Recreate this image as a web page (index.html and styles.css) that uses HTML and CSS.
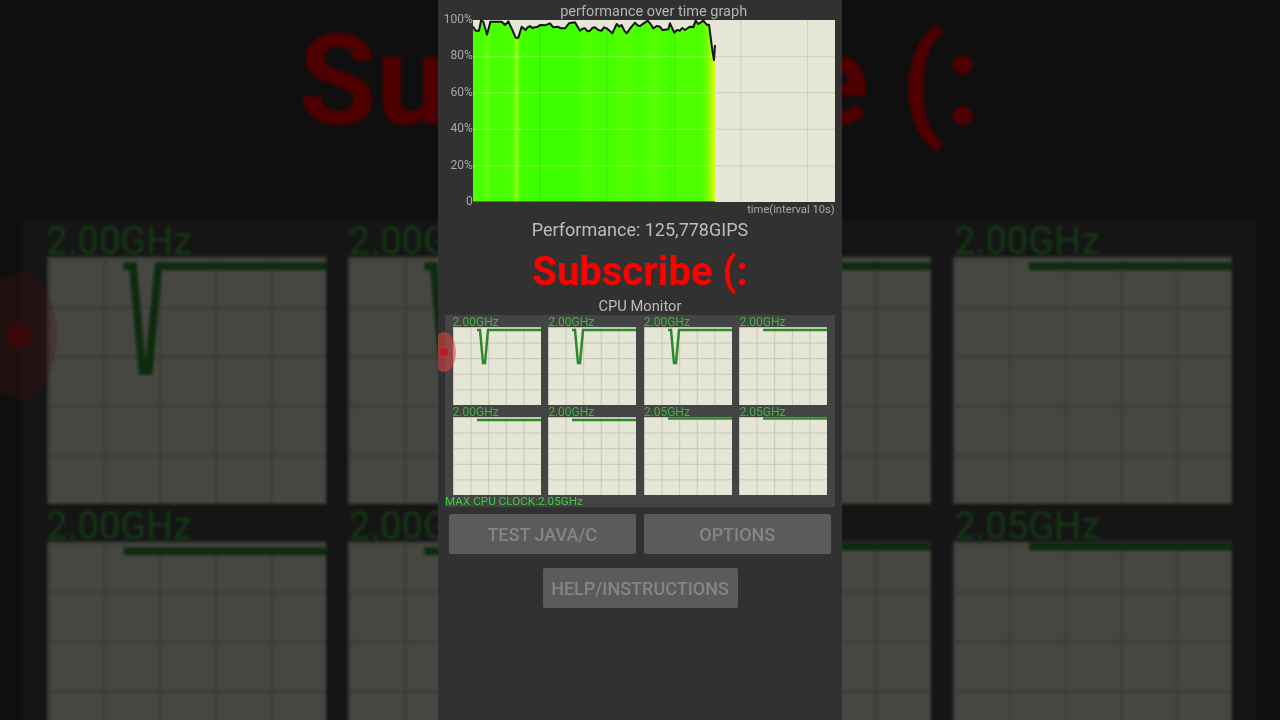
FILE: index.html
```html
<!DOCTYPE html>
<html lang="en">
<head>
    <meta charset="UTF-8">
    <meta name="viewport" content="width=device-width, initial-scale=1.0">
    <title>CPU Throttling Test</title>
    <link rel="stylesheet" href="styles.css">
</head>
<body>

    <!-- Enlarged, dimmed copy of the lower screen behind the video -->
    <div class="backdrop" aria-hidden="true">
        <div class="backdrop-inner">
            <div class="subscribe">Subscribe (:</div>
            <div class="cpu-title"></div>
            <div class="monitor">
                <div class="core"><span class="core-label">2.00GHz</span><div class="core-plot"><svg class="trace" viewBox="0 0 88 78"><polyline points="24,3 27,3 30,36 32,36 35,3 88,3"/></svg></div></div>
                <div class="core"><span class="core-label">2.00GHz</span><div class="core-plot"><svg class="trace" viewBox="0 0 88 78"><polyline points="24,3 27,3 30,36 32,36 35,3 88,3"/></svg></div></div>
                <div class="core"><span class="core-label">2.00GHz</span><div class="core-plot"><svg class="trace" viewBox="0 0 88 78"><polyline points="24,3 27,3 30,36 32,36 35,3 88,3"/></svg></div></div>
                <div class="core"><span class="core-label">2.00GHz</span><div class="core-plot"><svg class="trace" viewBox="0 0 88 78"><polyline points="24,3 88,3"/></svg></div></div>
                <div class="core"><span class="core-label">2.00GHz</span><div class="core-plot"><svg class="trace" viewBox="0 0 88 78"><polyline points="24,3 88,3"/></svg></div></div>
                <div class="core"><span class="core-label">2.00GHz</span><div class="core-plot"><svg class="trace" viewBox="0 0 88 78"><polyline points="24,3 88,3"/></svg></div></div>
                <div class="core"><span class="core-label">2.05GHz</span><div class="core-plot"><svg class="trace" viewBox="0 0 88 78"><polyline points="24,1.5 88,1.5"/></svg></div></div>
                <div class="core"><span class="core-label">2.05GHz</span><div class="core-plot"><svg class="trace" viewBox="0 0 88 78"><polyline points="24,1.5 88,1.5"/></svg></div></div>
            </div>
            <div class="touch-dot touch-dot-back"></div>
        </div>
    </div>

    <div class="phone">
        <div class="graph">
            <div class="graph-title">performance over time graph</div>
            <div class="y-labels">
                <span>100%</span>
                <span>80%</span>
                <span>60%</span>
                <span>40%</span>
                <span>20%</span>
                <span>0</span>
            </div>
            <svg class="plot" viewBox="104 60 1086 545" preserveAspectRatio="none">
                <defs>
                    <linearGradient id="bands" gradientUnits="userSpaceOnUse" x1="104" y1="0" x2="830" y2="0">
                        <stop offset="0" stop-color="#50ff00"/>
                        <stop offset=".036" stop-color="#44ff00"/>
                        <stop offset=".058" stop-color="#62ff0c"/>
                        <stop offset=".077" stop-color="#44ff00"/>
                        <stop offset=".163" stop-color="#4cff00"/>
                        <stop offset=".18" stop-color="#8cff18"/>
                        <stop offset=".194" stop-color="#46ff00"/>
                        <stop offset=".27" stop-color="#3cff00"/>
                        <stop offset=".435" stop-color="#3eff00"/>
                        <stop offset=".463" stop-color="#50ff00"/>
                        <stop offset=".545" stop-color="#42ff00"/>
                        <stop offset=".63" stop-color="#54ff00"/>
                        <stop offset=".683" stop-color="#46ff00"/>
                        <stop offset=".752" stop-color="#56ff04"/>
                        <stop offset=".82" stop-color="#42ff00"/>
                        <stop offset=".842" stop-color="#52ff00"/>
                        <stop offset=".945" stop-color="#4eff00"/>
                        <stop offset=".98" stop-color="#90ff00"/>
                        <stop offset="1" stop-color="#e6ff10"/>
                    </linearGradient>
                </defs>
                <path class="grid-line" d="M104 170H1190M104 278H1190M104 387H1190M104 497H1190M908 60V605M1108 60V605"/>
                <polygon class="fill" points="104,80 112,92 122,92 128,62 135,65 146,104 156,65 190,65 200,75 210,64 222,90 232,113 240,113 250,80 262,90 275,78 290,82 305,75 335,70 345,82 380,85 392,70 410,67 425,92 440,85 455,92 470,82 490,92 505,85 522,100 535,72 550,75 565,100 590,68 605,78 628,62 645,85 665,80 672,90 690,88 695,70 708,98 725,92 740,90 755,80 772,62 780,72 795,62 805,74 812,74 822,150 827,180 830,180 830,605 104,605"/>
                <path class="grid-on-green-h" d="M104 170H826M104 278H830M104 387H830M104 497H830"/>
                <path class="grid-on-green-v" d="M304 75V605M505 85V605M710 92V605"/>
                <path class="baseline" d="M104 604H830"/>
                <polyline class="curve" points="104,80 112,92 122,92 128,62 135,65 146,104 156,65 190,65 200,75 210,64 222,90 232,113 240,113 250,80 262,90 268,82 275,78 282,84 290,82 298,80 305,75 320,76 335,70 345,82 358,80 368,85 380,85 392,70 410,67 425,92 432,86 440,85 448,94 455,92 462,84 470,82 480,90 490,92 497,82 505,85 514,92 522,100 535,72 543,80 550,75 558,92 565,100 578,82 590,68 598,76 605,78 616,70 628,62 638,74 645,85 655,78 665,80 672,90 690,88 695,70 708,98 716,90 725,92 732,84 740,90 755,80 765,82 772,62 780,72 795,62 805,74 812,74 822,150 827,180 830,135"/>
            </svg>
            <div class="x-label">time(interval 10s)</div>
        </div>

        <div class="performance">Performance: 125,778GIPS</div>
        <div class="subscribe">Subscribe (:</div>
        <div class="cpu-title">CPU Monitor</div>

        <div class="monitor">
            <div class="core"><span class="core-label">2.00GHz</span><div class="core-plot"><svg class="trace" viewBox="0 0 88 78"><polyline points="24,3 27,3 30,36 32,36 35,3 88,3"/></svg></div></div>
            <div class="core"><span class="core-label">2.00GHz</span><div class="core-plot"><svg class="trace" viewBox="0 0 88 78"><polyline points="24,3 27,3 30,36 32,36 35,3 88,3"/></svg></div></div>
            <div class="core"><span class="core-label">2.00GHz</span><div class="core-plot"><svg class="trace" viewBox="0 0 88 78"><polyline points="24,3 27,3 30,36 32,36 35,3 88,3"/></svg></div></div>
            <div class="core"><span class="core-label">2.00GHz</span><div class="core-plot"><svg class="trace" viewBox="0 0 88 78"><polyline points="24,3 88,3"/></svg></div></div>
            <div class="core"><span class="core-label">2.00GHz</span><div class="core-plot"><svg class="trace" viewBox="0 0 88 78"><polyline points="24,3 88,3"/></svg></div></div>
            <div class="core"><span class="core-label">2.00GHz</span><div class="core-plot"><svg class="trace" viewBox="0 0 88 78"><polyline points="24,3 88,3"/></svg></div></div>
            <div class="core"><span class="core-label">2.05GHz</span><div class="core-plot"><svg class="trace" viewBox="0 0 88 78"><polyline points="24,1.5 88,1.5"/></svg></div></div>
            <div class="core"><span class="core-label">2.05GHz</span><div class="core-plot"><svg class="trace" viewBox="0 0 88 78"><polyline points="24,1.5 88,1.5"/></svg></div></div>
            <div class="max-clock">MAX CPU CLOCK:2.05GHz</div>
        </div>

        <div class="button-row">
            <button class="btn" type="button">TEST JAVA/C</button>
            <button class="btn" type="button">OPTIONS</button>
        </div>
        <button class="btn btn-help" type="button">HELP/INSTRUCTIONS</button>

        <div class="touch-dot touch-dot-front"></div>
    </div>

</body>
</html>
```

FILE: styles.css
```css
* {
    box-sizing: border-box;
}
html, body {
    height: 100%;
}
body {
    font-family: 'Roboto', 'Liberation Sans', sans-serif;
    background-color: #0f0f0f;
    margin: 0;
    overflow: hidden;
    position: relative;
}

/* blurred copy behind the video */
.backdrop {
    position: absolute;
    top: 0;
    left: 0;
    width: 1280px;
    height: 720px;
    overflow: hidden;
}
.backdrop-inner {
    position: absolute;
    top: -25px;
    left: 0;
    width: 404px;
    padding-top: 4px;
    transform-origin: top left;
    transform: scale(3.166);
    filter: brightness(0.31) blur(0.5px);
}

.phone {
    position: relative;
    width: 404px;
    height: 720px;
    margin: 0 auto;
    background-color: #313131;
    overflow: hidden;
    filter: blur(0.4px);
}

/* performance graph */
.graph {
    display: grid;
    grid-template-columns: 34.7px 362px;
    grid-template-rows: 20px 182px 16px;
}
.graph-title {
    grid-column: 2;
    text-align: center;
    font-size: 14.5px;
    line-height: 23px;
    color: #b4b4b4;
    white-space: nowrap;
}
.y-labels {
    grid-column: 1;
    grid-row: 2;
    display: flex;
    flex-direction: column;
    justify-content: space-between;
    font-size: 12px;
    color: #a8a8a8;
    text-align: right;
}
.y-labels span {
    height: 0;
    line-height: 0;
    position: relative;
    top: -1px;
}
.plot {
    grid-column: 2;
    grid-row: 2;
    display: block;
    width: 362px;
    height: 182px;
    background-color: #e6e6d6;
}
.plot .grid-line {
    stroke: #cbcbbb;
    stroke-width: 3;
    fill: none;
}
.plot .fill {
    fill: url(#bands);
}
.plot .grid-on-green-h {
    stroke: rgba(255, 255, 170, 0.3);
    stroke-width: 3;
    fill: none;
}
.plot .grid-on-green-v {
    stroke: rgba(0, 110, 0, 0.14);
    stroke-width: 3;
    fill: none;
}
.plot .baseline {
    stroke: #2f9a10;
    stroke-width: 4;
    fill: none;
}
.plot .curve {
    stroke: #141414;
    stroke-width: 6;
    fill: none;
    stroke-linejoin: round;
}
.x-label {
    grid-column: 2;
    text-align: right;
    font-size: 11.2px;
    line-height: 16px;
    color: #a8a8a8;
    white-space: nowrap;
}

.performance {
    height: 24px;
    text-align: center;
    font-size: 18px;
    line-height: 24px;
    color: #bdbdbd;
    white-space: nowrap;
}
.subscribe {
    height: 56px;
    text-align: center;
    font-size: 40px;
    font-weight: 700;
    line-height: 60px;
    color: #ff0000;
    white-space: nowrap;
}
.cpu-title {
    height: 17px;
    text-align: center;
    font-size: 14.7px;
    line-height: 17px;
    color: #bdbdbd;
}

/* CPU monitor */
.monitor {
    width: 390px;
    margin-left: 7px;
    padding: 0 7.6px;
    background-color: #444444;
    display: grid;
    grid-template-columns: repeat(4, 88px);
    column-gap: 7.6px;
}
.core {
    height: 90px;
    display: flex;
    flex-direction: column;
}
.core-label {
    height: 12px;
    font-size: 12px;
    line-height: 14px;
    color: #3fb53f;
    white-space: nowrap;
}
.core-plot {
    flex: 1;
    background-color: #e6e6d6;
    background-image:
        linear-gradient(to right, #c6c6b6 1px, transparent 1px),
        linear-gradient(to bottom, #c6c6b6 1px, transparent 1px);
    background-size: 17.6px 15.6px;
}
.trace {
    display: block;
    width: 88px;
    height: 78px;
}
.trace polyline {
    fill: none;
    stroke: #2a8a2a;
    stroke-width: 2.5;
}
.max-clock {
    grid-column: 1 / -1;
    height: 12px;
    margin-left: -7.6px;
    font-size: 11.7px;
    line-height: 13px;
    color: #3ccf3c;
    white-space: nowrap;
}

/* buttons */
.button-row {
    display: flex;
    gap: 8.5px;
    margin: 7px 0 14px 11px;
}
.btn {
    display: block;
    width: 186.5px;
    height: 40px;
    padding: 0;
    border: none;
    border-radius: 2px;
    background-color: #5b5b5b;
    color: #858585;
    font-family: inherit;
    font-size: 18px;
    font-weight: 500;
}
.btn-help {
    width: 195px;
    margin: 0 auto;
}

/* touch indicator, sits over the monitor */
.touch-dot {
    position: absolute;
    left: -6px;
    width: 24px;
    height: 40px;
    border-radius: 50%;
    background-color: rgba(225, 70, 70, 0.55);
}
.touch-dot::after {
    content: "";
    position: absolute;
    left: 8px;
    top: 16px;
    width: 8px;
    height: 8px;
    border-radius: 50%;
    background-color: #b81c1c;
}
.touch-dot-front {
    top: 332px;
}
.touch-dot-back {
    top: 94px;
    background-color: rgba(225, 50, 50, 0.3);
}
```
